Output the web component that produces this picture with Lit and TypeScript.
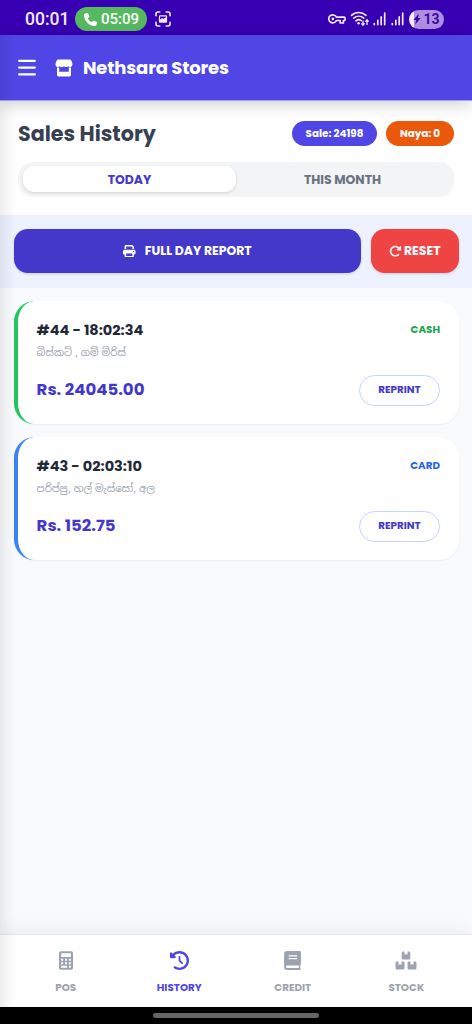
import { LitElement, html, svg, css } from "lit";
import { customElement, property, state } from "lit/decorators.js";

interface Sale {
  id: number;
  time: string;
  items: string;
  total: string;
  method: "cash" | "card";
}

const SALES: Sale[] = [
  { id: 44, time: "18:02:34", items: "බිස්කට් , ගම් මිරිස්", total: "24045.00", method: "cash" },
  { id: 43, time: "02:03:10", items: "පරිප්පු, හල් මැස්සෝ, අල", total: "152.75", method: "card" },
];

const ICONS: Record<string, { box: string; body: unknown }> = {
  bars: {
    box: "0 0 18 18",
    body: svg`<path d="M1.2 1.800H16.8M1.2 8.600H16.8M1.2 15.400H16.8" stroke="currentColor" stroke-width="2.3" stroke-linecap="round"/>`,
  },
  store: {
    box: "0 0 18 18",
    body: svg`<path fill="currentColor" d="M3.200.4h11.600c.7 0 1.200.3 1.500 1l1 2.700c.6 2-.3 3.600-1.700 3.900-1 .1-1.800-.2-2.300-.8-.5.600-1.200.9-2.200.9S9.500 7.800 9 7.200c-.5.600-1.300.9-2.300.9s-1.700-.3-2.200-.9c-.5.600-1.300.9-2.300.8C.8 7.700.1 6.100.7 4.100l1-2.700c.3-.7.8-1 1.500-1z"/><path fill="currentColor" fill-rule="evenodd" d="M2 8.500h2.200v4.300h9.600V8.500H16v7.300c0 1-.7 1.700-1.700 1.700H3.700c-1 0-1.700-.7-1.700-1.700z"/>`,
  },
  phone: {
    box: "0 0 512 512",
    body: svg`<path fill="currentColor" d="M164.9 24.6c-7.7-18.6-28-28.5-47.4-23.2l-88 24C12.1 30.2 0 46 0 64C0 311.4 200.6 512 448 512c18 0 33.8-12.1 38.6-29.5l24-88c5.3-19.4-4.6-39.7-23.2-47.4l-96-40c-16.3-6.8-35.2-2.1-46.3 11.6L304.7 368C234.3 334.7 177.3 277.7 144 207.3L193.3 167c13.7-11.2 18.4-30 11.6-46.3l-40-96z"/>`,
  },
  capture: {
    box: "0 0 16 16",
    body: svg`<path d="M1 4.800V3a2 2 0 0 1 2-2h1.800M11.200 1H13a2 2 0 0 1 2 2v1.800M15 11.200V13a2 2 0 0 1-2 2h-1.800M4.800 15H3a2 2 0 0 1-2-2v-1.800" fill="none" stroke="currentColor" stroke-width="1.600" stroke-linecap="round"/><path fill="currentColor" fill-rule="evenodd" d="M5.200 4.300h5.600c.8 0 1.300.5 1.300 1.300v4.800c0 .8-.5 1.300-1.300 1.300H5.200c-.8 0-1.300-.5-1.300-1.300V5.600c0-.8.5-1.300 1.300-1.300zM5 8.600l2-1.500 1.300 1L10.900 6.200V5.400H5z"/>`,
  },
  key: {
    box: "0 0 18 12",
    body: svg`<path d="M8.400 4.200H16.300a.7.700 0 0 1 .7.700v1.900a.7.700 0 0 1-.7.700H15.400V10H12.200V7.500H8.400A4 4 0 1 1 8.400 4.200z" fill="none" stroke="currentColor" stroke-width="1.700" stroke-linejoin="round"/><circle cx="4.900" cy="5.900" r="1.300" fill="currentColor"/>`,
  },
  wifi: {
    box: "0 0 20 16",
    body: svg`<g fill="none" stroke="currentColor" stroke-linecap="round" stroke-width="1.600"><path d="M1.500 4.400c4-3.800 10.500-3.800 14.500 0M3.700 7.200c3-2.700 7.200-2.700 10.100 0M6 9.900c1.600-1.400 3.600-1.500 5.200-.2"/></g><circle cx="8.600" cy="12.300" r="1.200" fill="currentColor"/><path d="M13 9.500v4.500m-1.600-1.700L13 14.200l1.600-1.900M17 14V9m-1.600 1.700L17 8.800l1.600 1.900" fill="none" stroke="currentColor" stroke-width="1.300"/>`,
  },
  signal: {
    box: "0 0 14 14",
    body: svg`<path d="M1.300 11.600V12.600M4.800 8.300v4.300M8.200 4.900V12.600M11.700 1.200V12.600" stroke="currentColor" stroke-width="1.700" stroke-linecap="round"/>`,
  },
  bolt: {
    box: "0 0 8 12",
    body: svg`<path fill="currentColor" d="M5.900.6.400 6.900h2.700L2.200 11.400 7.700 5H4.900z"/>`,
  },
  print: {
    box: "0 0 512 512",
    body: svg`<path fill="currentColor" d="M128 0C92.700 0 64 28.700 64 64v96h64V64H354.700L384 93.300V160h64V93.300c0-17-6.700-33.300-18.700-45.300L400 18.700C388 6.700 371.700 0 354.700 0H128zM384 352v32 64H128V384 368 352H384zm64 32h32c17.700 0 32-14.300 32-32V256c0-35.300-28.700-64-64-64H64c-35.300 0-64 28.700-64 64v96c0 17.700 14.300 32 32 32H64v64c0 35.300 28.700 64 64 64H384c35.300 0 64-28.700 64-64V384zM432 248a24 24 0 1 1 0 48 24 24 0 1 1 0-48z"/>`,
  },
  redo: {
    box: "0 0 512 512",
    body: svg`<path fill="currentColor" d="M463.500 224H472c13.300 0 24-10.700 24-24V72c0-9.700-5.800-18.500-14.800-22.200s-19.300-1.700-26.200 5.200L413.400 96.600c-87.600-86.500-228.700-86.200-315.800 1c-87.500 87.500-87.500 229.300 0 316.800s229.300 87.500 316.800 0c12.500-12.500 12.500-32.800 0-45.300s-32.800-12.500-45.300 0c-62.500 62.500-163.800 62.500-226.300 0s-62.500-163.800 0-226.300c62.200-62.200 162.700-62.500 225.300-1L327 183c-6.900 6.900-8.900 17.200-5.200 26.200s12.500 14.800 22.200 14.800H463.500z"/>`,
  },
  calculator: {
    box: "0 0 384 512",
    body: svg`<path fill="currentColor" fill-rule="evenodd" d="M48 0H336a48 48 0 0 1 48 48V464a48 48 0 0 1-48 48H48a48 48 0 0 1-48-48V48A48 48 0 0 1 48 0zM58 58V160H326V58zM58 205v58h56v-58zM164 205v58h56v-58zM270 205v58h56v-58zM58 303v56h56v-56zM164 303v56h56v-56zM270 303v56h56v-56zM58 400v54h162v-54zM270 400v54h56v-54z"/>`,
  },
  history: {
    box: "0 0 512 512",
    body: svg`<path fill="currentColor" d="M75 75L41 41C25.900 25.900 0 36.600 0 57.900V168c0 13.300 10.700 24 24 24H134.100c21.400 0 32.100-25.900 17-41l-30.800-30.800C155 85.500 203 64 256 64c106 0 192 86 192 192s-86 192-192 192c-40.800 0-78.600-12.700-109.700-34.400c-14.500-10.100-34.400-6.600-44.600 7.900s-6.600 34.400 7.900 44.600C151.200 495 201.700 512 256 512c141.400 0 256-114.600 256-256S397.400 0 256 0C185.300 0 121.300 28.700 75 75zm181 53c-13.300 0-24 10.700-24 24V256c0 6.400 2.500 12.500 7 17l72 72c9.400 9.400 24.600 9.400 33.900 0s9.400-24.600 0-33.900l-65-65V152c0-13.300-10.700-24-24-24z"/>`,
  },
  book: {
    box: "0 0 16 18",
    body: svg`<path fill="currentColor" fill-rule="evenodd" d="M3 0H15a1 1 0 0 1 1 1V12.400a1 1 0 0 1-.6.900V16.600a.8.800 0 0 1 0 1.400H3a3 3 0 0 1-3-3V3A3 3 0 0 1 3 0zM3 13.700a1.150 1.150 0 0 0 0 2.300H14V13.700zM4.800 4a.5.500 0 0 0 0 1.100H12a.5.500 0 0 0 0-1.100zM4.800 6.600a.5.500 0 0 0 0 1.100H12a.5.500 0 0 0 0-1.100z"/>`,
  },
  boxes: {
    box: "0 0 22 19",
    body: svg`<path fill="currentColor" d="M8.200.5h1.300v3.300l1.500-.8 1.500.8V.5h1.300c.9 0 1.500.6 1.500 1.500v5c0 .9-.6 1.500-1.500 1.500H8.200c-.9 0-1.500-.6-1.500-1.500V2c0-.9.6-1.500 1.500-1.500zM2 10.600h1.500v3.300l1.500-.8 1.500.8v-3.300H8c.9 0 1.500.6 1.500 1.500V17c0 .9-.6 1.500-1.500 1.500H2c-.9 0-1.500-.6-1.500-1.500v-4.900c0-.9.6-1.500 1.500-1.500zM14 10.600h1.500v3.300l1.500-.8 1.500.8v-3.300H20c.9 0 1.500.6 1.500 1.500V17c0 .9-.6 1.500-1.500 1.500h-6c-.9 0-1.500-.6-1.500-1.500v-4.900c0-.9.6-1.500 1.500-1.500z"/>`,
  },
};

@customElement("ui-icon")
class UiIcon extends LitElement {
  @property() name = "bars";
  static styles = css`
    :host { display: block; flex: none; }
    svg { display: block; width: 100%; height: 100%; }
  `;
  render() {
    const icon = ICONS[this.name];
    return html`<svg viewBox=${icon.box} aria-hidden="true">${icon.body}</svg>`;
  }
}

@customElement("status-bar")
class StatusBar extends LitElement {
  static styles = css`
    :host { display: flex; align-items: center; height: 35px; box-sizing: border-box; padding: 3px 28px 0 25px; background: #3700b3; color: #f3eaff; font-family: Roboto, sans-serif; font-size: 17.500px; font-weight: 500; }
    .clock { width: 50px; white-space: nowrap; }
    .call { display: flex; align-items: center; gap: 4px; width: 72px; height: 24px; box-sizing: border-box; padding-left: 9px; border-radius: 12px; background: #55b95f; color: #fff; font-size: 15px; }
    .phone { width: 13px; height: 13px; }
    .capture { width: 16px; height: 16px; margin-left: 8px; }
    .right { display: flex; align-items: center; margin-left: auto; }
    .key { width: 18px; height: 12px; }
    .wifi { width: 20px; height: 16px; margin-left: 4px; }
    .sig { width: 14px; height: 14px; margin-left: 3px; }
    .sig2 { margin-left: 4px; }
    .battery { display: flex; align-items: center; justify-content: center; width: 35px; height: 19px; margin-left: 4px; border-radius: 10px; background: linear-gradient(90deg, #f5edff 5px, #b08ee0 5px); color: #3a08a8; font-size: 14px; font-weight: 700; }
    .bolt { width: 8px; height: 12px; margin-right: 2px; }
  `;
  render() {
    return html`
      <span class="clock">00:01</span>
      <span class="call"><ui-icon class="phone" name="phone"></ui-icon>05:09</span>
      <ui-icon class="capture" name="capture"></ui-icon>
      <div class="right">
        <ui-icon class="key" name="key"></ui-icon>
        <ui-icon class="wifi" name="wifi"></ui-icon>
        <ui-icon class="sig" name="signal"></ui-icon>
        <ui-icon class="sig sig2" name="signal"></ui-icon>
        <span class="battery"><ui-icon class="bolt" name="bolt"></ui-icon>13</span>
      </div>
    `;
  }
}

@customElement("sale-card")
class SaleCard extends LitElement {
  @property({ attribute: false }) sale!: Sale;
  static styles = css`
    :host { display: block; }
    .card { display: flex; justify-content: space-between; height: 123px; box-sizing: border-box; padding: 18px 19px 18px 18.600px; border-left: 4.500px solid; border-radius: 20.700px; background: #fff; box-shadow: 0 1px 2px rgba(0, 0, 0, 0.06); }
    .cash { border-color: #22c55e; }
    .card-pay { border-color: #3b82f6; }
    .info, .side { display: flex; flex-direction: column; }
    .side { align-items: flex-end; justify-content: space-between; }
    .ref { height: 22px; color: #1f2937; font-size: 14.490px; font-weight: 700; line-height: 23px; white-space: nowrap; }
    .items { height: 22px; color: #9ca3af; font-family: Inter, "Noto Sans", "Noto Sans Sinhala", sans-serif; font-size: 10.200px; line-height: 23px; white-space: nowrap; }
    .total { height: 26px; margin-top: 14px; color: #4338ca; font-size: 16.560px; font-weight: 700; line-height: 26px; white-space: nowrap; }
    .method { font-size: 10.350px; font-weight: 700; line-height: 22px; }
    .method-cash { color: #16a34a; }
    .method-card { color: #2563eb; }
    .reprint { width: 81px; height: 31px; box-sizing: border-box; padding: 0 0 2px; border: 1px solid #c7d2fe; border-radius: 16px; background: #fff; color: #4338ca; font: inherit; font-size: 10.350px; font-weight: 700; }
  `;
  render() {
    const s = this.sale;
    return html`
      <article class="card ${s.method === "cash" ? "cash" : "card-pay"}">
        <div class="info">
          <span class="ref">#${s.id} - ${s.time}</span>
          <span class="items">${s.items}</span>
          <span class="total">Rs. ${s.total}</span>
        </div>
        <div class="side">
          <span class="method method-${s.method}">${s.method.toUpperCase()}</span>
          <button class="reprint">REPRINT</button>
        </div>
      </article>
    `;
  }
}

@customElement("app-root")
class AppRoot extends LitElement {
  @state() private tab = "today";

  static styles = css`
    :host { position: relative; display: flex; flex-direction: column; width: 472px; height: 1024px; overflow: hidden; background: #f9fafb; font-family: Poppins, Inter, sans-serif; }
    button { font-family: inherit; border: 0; padding: 0; margin: 0; }
    .header { z-index: 1; display: flex; align-items: center; flex: none; height: 65px; box-sizing: border-box; padding-left: 18px; background: #4f46e5; color: #fff; box-shadow: 0 1px 0 #a5a0ee, 0 4px 16px rgba(0, 0, 0, 0.2); }
    .menu { width: 18px; height: 18px; }
    .store { width: 18px; height: 18px; margin-left: 19px; }
    .brand { margin-left: 10px; font-size: 18px; font-weight: 700; letter-spacing: -0.2px; white-space: nowrap; }
    .summary { flex: none; height: 115px; box-sizing: border-box; padding: 20px 18px 0; background: #fff; }
    .title-row { display: flex; align-items: center; height: 26px; }
    .title { margin: 0 auto 0 0; color: #374151; font-size: 20.700px; font-weight: 700; white-space: nowrap; }
    .pill { display: grid; place-items: center; height: 25px; box-sizing: border-box; padding-top: 1px; border-radius: 13px; color: #fff; font-size: 10.350px; font-weight: 700; white-space: nowrap; }
    .pill-sale { width: 85px; background: #4f46e5; }
    .pill-naya { width: 68px; margin-left: 9px; background: #ea580c; }
    .tabs { display: grid; grid-template-columns: 1fr 1fr; height: 35px; box-sizing: border-box; margin-top: 16px; padding: 4px 5px 5px; border-radius: 15px; background: #f3f4f6; }
    .tab { padding-top: 1px; border-radius: 11px; background: none; color: #6b7280; font-size: 12.420px; font-weight: 700; }
    .tab-on { background: #fff; color: #4338ca; box-shadow: 0 1px 3px rgba(0, 0, 0, 0.14); }
    .actions { display: flex; gap: 9.500px; flex: none; height: 73px; box-sizing: border-box; padding: 14px 13px 15px 14px; background: #eef2ff; }
    .btn { display: flex; align-items: center; justify-content: center; border-radius: 14px; color: #fff; font-size: 12.420px; font-weight: 700; white-space: nowrap; box-shadow: 0 1px 3px rgba(0, 0, 0, 0.15); }
    .report { flex: 1; gap: 9px; background: #4338ca; }
    .reset { width: 88.500px; gap: 2.500px; background: #ef4444; }
    .act-icon { width: 12.500px; height: 12.500px; }
    .list { display: flex; flex-direction: column; gap: 13px; flex: 1; min-height: 0; padding: 13px 13px 0 14px; }
    .nav { z-index: 1; display: grid; grid-template-columns: repeat(4, 1fr); flex: none; height: 73px; box-sizing: border-box; padding: 0 9px; border-top: 1px solid #e5e7eb; background: #fff; box-shadow: 0 -5px 16px rgba(0, 0, 0, 0.05); }
    .nav-item { display: flex; flex-direction: column; align-items: center; gap: 10px; padding-top: 16px; background: none; color: #9ca3af; font-size: 10.350px; font-weight: 700; line-height: 16px; }
    .nav-on { color: #4f46e5; }
    .ico-calculator { width: 14px; height: 19px; }
    .ico-history { width: 19px; height: 19px; }
    .ico-book { width: 17px; height: 19px; }
    .ico-boxes { width: 22px; height: 19px; }
    .gesture { z-index: 1; display: grid; place-items: center; flex: none; height: 17px; background: #000; }
    .handle { width: 166px; height: 5px; border-radius: 3px; background: #666; }
    .edge { position: absolute; z-index: 2; left: 0; top: 35px; width: 16px; height: 972px; background: linear-gradient(90deg, rgba(0, 0, 0, 0.07), rgba(0, 0, 0, 0.03) 50%, transparent); pointer-events: none; }
  `;

  private tabButton(id: string, label: string) {
    return html`<button class="tab ${this.tab === id ? "tab-on" : ""}" @click=${() => (this.tab = id)}>${label}</button>`;
  }

  private navItem(icon: string, label: string, on = false) {
    return html`<button class="nav-item ${on ? "nav-on" : ""}"><ui-icon class="ico-${icon}" name=${icon}></ui-icon><span>${label}</span></button>`;
  }

  render() {
    return html`
      <status-bar></status-bar>
      <header class="header">
        <ui-icon class="menu" name="bars"></ui-icon>
        <ui-icon class="store" name="store"></ui-icon>
        <span class="brand">Nethsara Stores</span>
      </header>
      <section class="summary">
        <div class="title-row">
          <h1 class="title">Sales History</h1>
          <span class="pill pill-sale">Sale: 24198</span>
          <span class="pill pill-naya">Naya: 0</span>
        </div>
        <div class="tabs">${this.tabButton("today", "TODAY")}${this.tabButton("month", "THIS MONTH")}</div>
      </section>
      <div class="actions">
        <button class="btn report"><ui-icon class="act-icon" name="print"></ui-icon><span>FULL DAY REPORT</span></button>
        <button class="btn reset"><ui-icon class="act-icon" name="redo"></ui-icon><span>RESET</span></button>
      </div>
      <main class="list">${SALES.map((s) => html`<sale-card .sale=${s}></sale-card>`)}</main>
      <nav class="nav">
        ${this.navItem("calculator", "POS")}${this.navItem("history", "HISTORY", true)}${this.navItem("book", "CREDIT")}${this.navItem("boxes", "STOCK")}
      </nav>
      <div class="gesture"><div class="handle"></div></div>
      <div class="edge"></div>
    `;
  }
}
